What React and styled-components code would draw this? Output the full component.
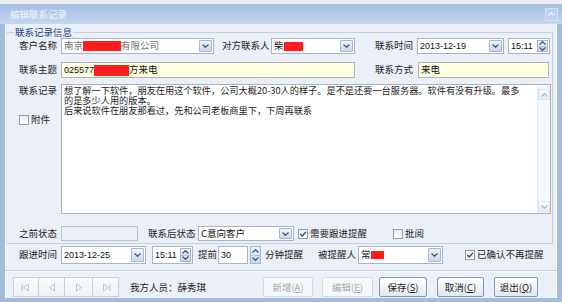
import React from 'react';
import styled, { createGlobalStyle } from 'styled-components';

const CJK = `"Noto Sans CJK SC", "Noto Sans", sans-serif`;
const LATIN = `"Liberation Sans", Arial, "Noto Sans CJK SC", sans-serif`;

const GlobalStyle = createGlobalStyle`
    html, body {
        margin: 0;
        padding: 0;
        background: #ffffff;
    }
    body {
        font-family: ${CJK};
    }
`;

const Window = styled.div`
    width: 562px;
    height: 302px;
    display: flex;
    flex-direction: column;
    overflow: hidden;
    font-family: ${CJK};
    font-size: 9.5px;
    color: #1c1c1c;
`;

const TopStrip = styled.div`
    flex: none;
    height: 4px;
    background: #e9edf2;
`;

const TitleBar = styled.div`
    flex: none;
    height: 20px;
    display: flex;
    align-items: center;
    justify-content: space-between;
    padding: 0 4px 0 10px;
    background: linear-gradient(#a4bee3, #c4d6ef);
`;

const Title = styled.span`
    color: rgba(255, 255, 255, 0.55);
    font-size: 9.5px;
    text-shadow: 0 0 1px rgba(255, 255, 255, 0.5);
`;

const CloseBox = styled.span`
    width: 13px;
    height: 13px;
    box-sizing: border-box;
    border: 1px solid #d6e2f2;
    background: #bdd0ec;
    display: flex;
    align-items: center;
    justify-content: center;
`;

const Body = styled.div`
    flex: 1;
    display: flex;
    flex-direction: column;
    background: #ebf0f8;
    border-left: 5px solid #a6bcdc;
    border-right: 5px solid #a6bcdc;
    border-bottom: 4px solid #a6bcdc;
    box-shadow: inset 1px 0 #f6f9fd, inset -1px 0 #f6f9fd;
`;

const Group = styled.fieldset`
    box-sizing: border-box;
    width: 547px;
    min-width: 0;
    margin: 3px 0 0 1px;
    padding: 0 0 2px 0;
    border: 1px solid #c6d0dd;
    border-left-color: #dde5ef;
`;

const Legend = styled.legend`
    margin-left: 7px;
    padding: 0 1px;
    font-size: 9.5px;
    line-height: 10px;
    color: #1f3f7a;
`;

const Row = styled.div`
    display: flex;
    align-items: stretch;
    height: ${p => p.$h}px;
    margin-top: ${p => p.$mt || 0}px;
    padding-left: ${p => p.$pl || 0}px;
`;

const Label = styled.span`
    flex: none;
    width: ${p => p.$w}px;
    margin-left: ${p => p.$ml || 0}px;
    display: flex;
    align-items: center;
    justify-content: ${p => (p.$right ? 'flex-end' : 'flex-start')};
    white-space: nowrap;
    line-height: 1;
`;

const Field = styled.div`
    flex: none;
    box-sizing: border-box;
    width: ${p => p.$w}px;
    margin-left: ${p => p.$ml || 0}px;
    display: flex;
    align-items: center;
    padding-left: 2px;
    border: 1px solid ${p => (p.$tone === 'off' ? '#b9c1cc' : '#abb3bf')};
    background: ${p => (p.$tone === 'yellow' ? '#ffffe1' : p.$tone === 'off' ? '#ebf0f8' : '#ffffff')};
    white-space: nowrap;
    overflow: hidden;
`;

const Value = styled.span`
    font-family: ${p => (p.$latin ? LATIN : CJK)};
    font-size: ${p => (p.$latin ? '9px' : '9.5px')};
    color: ${p => (p.$muted ? '#707070' : '#111111')};
    display: flex;
    align-items: center;
    line-height: 1;
`;

const Redact = styled.span`
    display: inline-block;
    width: ${p => p.$w}px;
    height: ${p => p.$h}px;
    background: #ff1c1c;
`;

const DropBtn = styled.span`
    flex: none;
    margin-left: auto;
    margin-right: 1px;
    width: 13px;
    height: calc(100% - 2px);
    box-sizing: border-box;
    border: 1px solid #a3b6d2;
    border-radius: 1px;
    background: linear-gradient(#f0f5fb, #c8d7eb);
    display: flex;
    align-items: center;
    justify-content: center;
`;

const Spin = styled.span`
    flex: none;
    margin-left: ${p => (p.$alone ? '2px' : 'auto')};
    margin-right: ${p => (p.$alone ? 0 : 1)}px;
    width: 11px;
    height: ${p => (p.$alone ? '100%' : 'calc(100% - 2px)')};
    box-sizing: border-box;
    display: flex;
    flex-direction: column;
    border: 1px solid #a3b6d2;
    background: linear-gradient(#f0f5fb, #c8d7eb);

    & > span {
        flex: 1;
        display: flex;
        align-items: center;
        justify-content: center;
    }
    & > span + span {
        border-top: 1px solid #b3c4dc;
    }
`;

const Check = styled.label`
    flex: none;
    margin-left: ${p => p.$ml || 0}px;
    display: flex;
    align-items: center;
    gap: 2px;
    white-space: nowrap;
    line-height: 1;
`;

const Box = styled.span`
    width: 10px;
    height: 10px;
    box-sizing: border-box;
    border: 1px solid #8d9db5;
    background: linear-gradient(#e9edf3, #ffffff);
    display: flex;
    align-items: center;
    justify-content: center;
`;

const SideCol = styled.div`
    flex: none;
    width: 50px;
    display: flex;
    flex-direction: column;
    align-items: flex-end;
`;

const SideLabel = styled.span`
    line-height: 10px;
    margin-top: 1px;
`;

const SideCheck = styled(Check)`
    align-self: flex-start;
    margin: 20px 0 0 12px;
`;

const Memo = styled.div`
    flex: none;
    box-sizing: border-box;
    width: 490px;
    margin-left: 4px;
    display: flex;
    border: 1px solid #abb3bf;
    background: #ffffff;
`;

const MemoText = styled.div`
    flex: 1;
    min-width: 0;
    padding: 0 0 0 2px;
    font-size: 9.2px;
    line-height: 10px;
    white-space: nowrap;
`;

const ScrollBar = styled.div`
    flex: none;
    width: 13px;
    display: flex;
    flex-direction: column;
    justify-content: space-between;
    padding: 4px 0 1px;
    box-sizing: border-box;
    background: #f5f8fd;
    border-left: 1px solid #e2eaf5;
`;

const ScrollArrow = styled.span`
    width: 12px;
    height: 11px;
    box-sizing: border-box;
    border: 1px solid #dbe4f0;
    background: linear-gradient(#fbfcfe, #e6edf7);
    display: flex;
    align-items: center;
    justify-content: center;
`;

const Divider = styled.div`
    flex: none;
    height: 1px;
    margin-top: 6px;
    background: #c9d1dc;
    box-shadow: 0 1px #f7f9fc;
`;

const NavGroup = styled.div`
    flex: none;
    display: flex;
`;

const NavBtn = styled.span`
    width: ${p => p.$w}px;
    height: 20px;
    box-sizing: border-box;
    border: 1px solid #c8cfd9;
    & + & {
        border-left: none;
    }
    background: linear-gradient(#f9fafc, #eef2f7);
    display: flex;
    align-items: center;
    justify-content: center;
`;

const Staff = styled.span`
    margin-left: 11px;
    display: flex;
    align-items: center;
    white-space: nowrap;
`;

const Actions = styled.div`
    margin-left: auto;
    padding-right: 19px;
    display: flex;
    align-items: center;
`;

const Btn = styled.button`
    flex: none;
    box-sizing: border-box;
    width: ${p => p.$w}px;
    height: 20px;
    margin-left: ${p => p.$ml || 0}px;
    padding: 0;
    font-family: ${CJK};
    font-size: 9.5px;
    border: 1px solid ${p => (p.disabled ? '#d3dae4' : '#8495b3')};
    border-radius: 2px;
    color: ${p => (p.disabled ? '#a9a9a9' : '#1c1c1c')};
    background: ${p => (p.disabled ? '#f6f8fb' : 'linear-gradient(#ffffff, #e2e9f3)')};

    & u {
        text-decoration-thickness: 1px;
        text-underline-offset: 1px;
    }
`;

const Chevron = ({ up, color = '#3d5579' }) => (
    <svg width="7" height="4" viewBox="0 0 7 4">
        <path d={up ? 'M0.5 3.5L3.5 0.7L6.5 3.5' : 'M0.5 0.5L3.5 3.3L6.5 0.5'} fill="none" stroke={color} strokeWidth="1.2" />
    </svg>
);

const Tick = () => (
    <svg width="8" height="8" viewBox="0 0 8 8">
        <path d="M1.3 4L3.3 6L6.9 1.8" fill="none" stroke="#34455f" strokeWidth="1.3" />
    </svg>
);

const NavGlyph = ({ kind }) => {
    const c = '#bcc4cf';
    const left = 'M7.5 1L2.5 4.5L7.5 8Z';
    const right = 'M2.5 1L7.5 4.5L2.5 8Z';
    return (
        <svg width="10" height="9" viewBox="0 0 10 9">
            {kind === 'first' && <path d="M1 1V8" stroke={c} />}
            {kind === 'last' && <path d="M9 1V8" stroke={c} />}
            <path d={kind === 'first' || kind === 'prev' ? left : right} fill="none" stroke={c} />
        </svg>
    );
};

const Combo = ({ w, ml, children }) => (
    <Field $w={w} $ml={ml}>
        {children}
        <DropBtn>
            <Chevron />
        </DropBtn>
    </Field>
);

const TimeSpin = ({ w, ml, value }) => (
    <Field $w={w} $ml={ml}>
        <Value $latin>{value}</Value>
        <Spin>
            <span>
                <Chevron up />
            </span>
            <span>
                <Chevron />
            </span>
        </Spin>
    </Field>
);

const CheckItem = ({ checked, ml, children }) => (
    <Check $ml={ml}>
        <Box>{checked && <Tick />}</Box>
        {children}
    </Check>
);

const App = () => (
    <>
        <GlobalStyle />
        <Window>
            <TopStrip />
            <TitleBar>
                <Title>编辑联系记录</Title>
                <CloseBox>
                    <Chevron up color="#eef3fa" />
                </CloseBox>
            </TitleBar>
            <Body>
                <Group>
                    <Legend>联系记录信息</Legend>
                    <Row $h={16} $mt={1}>
                        <Label $w={50} $right>客户名称</Label>
                        <Combo w={153} ml={4}>
                            <Value $muted>
                                南京
                                <Redact $w={38} $h={10} />
                                有限公司
                            </Value>
                        </Combo>
                        <Label $w={48} $ml={8}>对方联系人</Label>
                        <Combo w={84} ml={1}>
                            <Value>
                                柴
                                <Redact $w={19} $h={9} />
                            </Value>
                        </Combo>
                        <Label $w={39} $ml={20}>联系时间</Label>
                        <Combo w={87} ml={3}>
                            <Value $latin>2013-12-19</Value>
                        </Combo>
                        <TimeSpin w={42} ml={4} value="15:11" />
                    </Row>
                    <Row $h={16} $mt={8}>
                        <Label $w={50} $right>联系主题</Label>
                        <Field $w={294} $ml={4} $tone="yellow">
                            <Value>
                                <Value $latin>025577</Value>
                                <Redact $w={35} $h={11} />
                                方来电
                            </Value>
                        </Field>
                        <Label $w={39} $ml={20}>联系方式</Label>
                        <Field $w={131} $ml={4} $tone="yellow">
                            <Value>来电</Value>
                        </Field>
                    </Row>
                    <Row $h={130} $mt={6}>
                        <SideCol>
                            <SideLabel>联系记录</SideLabel>
                            <SideCheck>
                                <Box />
                                附件
                            </SideCheck>
                        </SideCol>
                        <Memo>
                            <MemoText>
                                想了解一下软件，朋友在用这个软件，公司大概20-30人的样子。是不是还要一台服务器。软件有没有升级。最多
                                <br />
                                的是多少人用的版本。
                                <br />
                                后来说软件在朋友那看过，先和公司老板商里下，下周再联系
                            </MemoText>
                            <ScrollBar>
                                <ScrollArrow>
                                    <Chevron up color="#a9bcd7" />
                                </ScrollArrow>
                                <ScrollArrow>
                                    <Chevron color="#a9bcd7" />
                                </ScrollArrow>
                            </ScrollBar>
                        </Memo>
                    </Row>
                    <Row $h={15} $mt={12}>
                        <Label $w={50} $right>之前状态</Label>
                        <Field $w={77} $ml={4} $tone="off" />
                        <Label $w={49} $ml={10}>联系后状态</Label>
                        <Combo w={96} ml={1}>
                            <Value>C意向客户</Value>
                        </Combo>
                        <CheckItem checked ml={4}>
                            需要跟进提醒
                        </CheckItem>
                        <CheckItem ml={26}>批阅</CheckItem>
                    </Row>
                </Group>
                <Row $h={18} $mt={2} $pl={2}>
                    <Label $w={50} $right>跟进时间</Label>
                    <Combo w={85} ml={4}>
                        <Value $latin>2013-12-25</Value>
                    </Combo>
                    <TimeSpin w={41} ml={6} value="15:11" />
                    <Label $w={19} $ml={5}>提前</Label>
                    <Field $w={30} $ml={1}>
                        <Value $latin>30</Value>
                    </Field>
                    <Spin $alone>
                        <span>
                            <Chevron up />
                        </span>
                        <span>
                            <Chevron />
                        </span>
                    </Spin>
                    <Label $w={38} $ml={4}>分钟提醒</Label>
                    <Label $w={38} $ml={15}>被提醒人</Label>
                    <Combo w={85} ml={2}>
                        <Value>
                            常
                            <Redact $w={13} $h={8} />
                        </Value>
                    </Combo>
                    <CheckItem checked ml={22}>
                        已确认不再提醒
                    </CheckItem>
                </Row>
                <Divider />
                <Row $h={20} $mt={6} $pl={8}>
                    <NavGroup>
                        <NavBtn $w={26}>
                            <NavGlyph kind="first" />
                        </NavBtn>
                        <NavBtn $w={26}>
                            <NavGlyph kind="prev" />
                        </NavBtn>
                        <NavBtn $w={28}>
                            <NavGlyph kind="next" />
                        </NavBtn>
                        <NavBtn $w={26}>
                            <NavGlyph kind="last" />
                        </NavBtn>
                    </NavGroup>
                    <Staff>我方人员：薛秀琪</Staff>
                    <Actions>
                        <Btn $w={50} disabled>
                            新增(<u>A</u>)
                        </Btn>
                        <Btn $w={51} $ml={9} disabled>
                            编辑(<u>E</u>)
                        </Btn>
                        <Btn $w={48} $ml={6}>
                            保存(<u>S</u>)
                        </Btn>
                        <Btn $w={47} $ml={10}>
                            取消(<u>C</u>)
                        </Btn>
                        <Btn $w={44} $ml={10}>
                            退出(<u>Q</u>)
                        </Btn>
                    </Actions>
                </Row>
            </Body>
        </Window>
    </>
);

export default App;
